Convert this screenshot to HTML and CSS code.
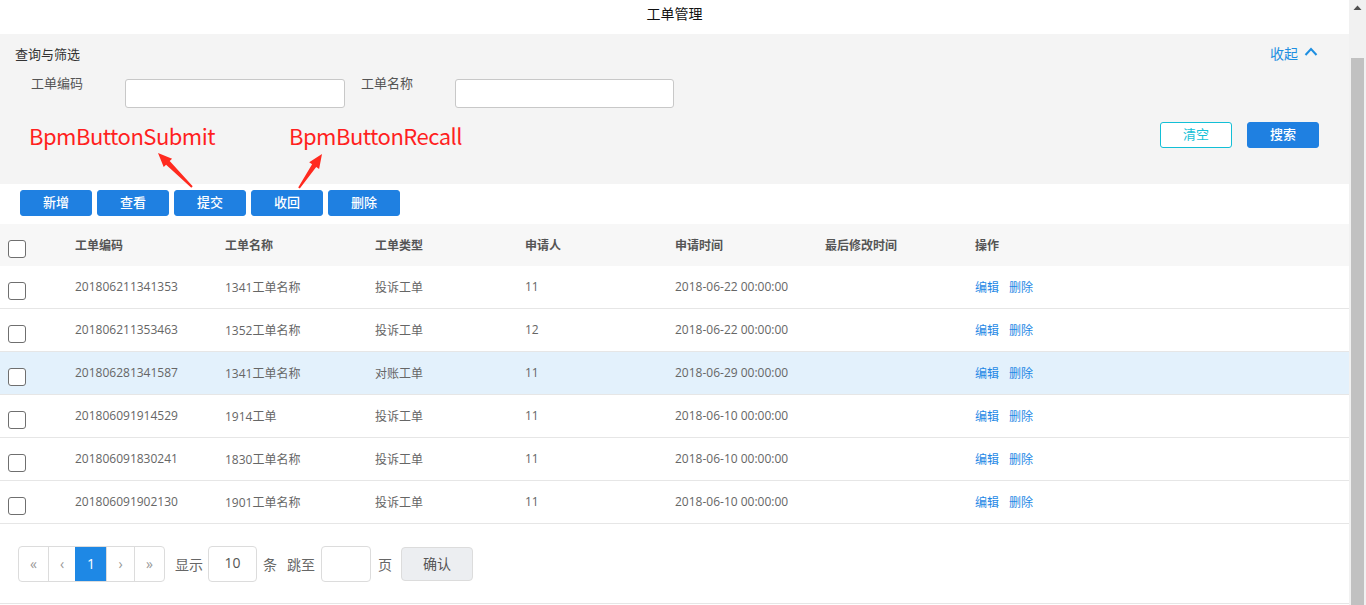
FILE: index.html
```html
<!DOCTYPE html>
<html lang="zh-CN">
<head>
<meta charset="utf-8">
<title>工单管理</title>
<link rel="stylesheet" href="styles.css">
</head>
<body>
<div class="page">
  <div class="main">
    <div class="title">工单管理</div>
    <section class="filter">
      <div class="filter-head">
        <span class="filter-title">查询与筛选</span>
        <a class="collapse">收起<svg class="chev" width="14" height="9" viewBox="0 0 14 9"><path d="M1.5 8 L7 2 L12.5 8" fill="none" stroke="currentColor" stroke-width="2"/></svg></a>
      </div>
      <div class="fields">
        <label class="field-label">工单编码</label>
        <input class="field-input field-input-a" type="text">
        <label class="field-label field-label-b">工单名称</label>
        <input class="field-input field-input-b" type="text">
      </div>
      <div class="filter-actions">
        <button class="btn btn-outline">清空</button>
        <button class="btn btn-primary">搜索</button>
      </div>
    </section>
    <div class="toolbar">
      <button class="btn btn-primary">新增</button>
      <button class="btn btn-primary">查看</button>
      <button class="btn btn-primary">提交</button>
      <button class="btn btn-primary">收回</button>
      <button class="btn btn-primary">删除</button>
    </div>
    <div class="table">
      <div class="row head">
        <div class="cell-check"><span class="checkbox"></span></div>
        <div>工单编码</div><div>工单名称</div><div>工单类型</div><div>申请人</div><div>申请时间</div><div>最后修改时间</div><div>操作</div>
      </div>
      <div class="row">
        <div class="cell-check"><span class="checkbox"></span></div>
        <div>201806211341353</div><div>1341工单名称</div><div>投诉工单</div><div class="num">11</div><div>2018-06-22 00:00:00</div><div></div>
        <div class="ops"><a>编辑</a><a>删除</a></div>
      </div>
      <div class="row">
        <div class="cell-check"><span class="checkbox"></span></div>
        <div>201806211353463</div><div>1352工单名称</div><div>投诉工单</div><div class="num">12</div><div>2018-06-22 00:00:00</div><div></div>
        <div class="ops"><a>编辑</a><a>删除</a></div>
      </div>
      <div class="row active">
        <div class="cell-check"><span class="checkbox"></span></div>
        <div>201806281341587</div><div>1341工单名称</div><div>对账工单</div><div class="num">11</div><div>2018-06-29 00:00:00</div><div></div>
        <div class="ops"><a>编辑</a><a>删除</a></div>
      </div>
      <div class="row">
        <div class="cell-check"><span class="checkbox"></span></div>
        <div>201806091914529</div><div>1914工单</div><div>投诉工单</div><div class="num">11</div><div>2018-06-10 00:00:00</div><div></div>
        <div class="ops"><a>编辑</a><a>删除</a></div>
      </div>
      <div class="row">
        <div class="cell-check"><span class="checkbox"></span></div>
        <div>201806091830241</div><div>1830工单名称</div><div>投诉工单</div><div class="num">11</div><div>2018-06-10 00:00:00</div><div></div>
        <div class="ops"><a>编辑</a><a>删除</a></div>
      </div>
      <div class="row">
        <div class="cell-check"><span class="checkbox"></span></div>
        <div>201806091902130</div><div>1901工单名称</div><div>投诉工单</div><div class="num">11</div><div>2018-06-10 00:00:00</div><div></div>
        <div class="ops"><a>编辑</a><a>删除</a></div>
      </div>
    </div>
    <div class="pager">
      <div class="pages">
        <span class="pg pg-first">«</span>
        <span class="pg pg-prev">‹</span>
        <span class="pg pg-cur">1</span>
        <span class="pg pg-next">›</span>
        <span class="pg pg-last">»</span>
      </div>
      <span class="pg-text pg-show">显示</span>
      <input class="pg-input" type="text" value="10">
      <span class="pg-text pg-unit">条</span>
      <span class="pg-text pg-jump">跳至</span>
      <input class="pg-input pg-input-jump" type="text">
      <span class="pg-text pg-page">页</span>
      <button class="pg-confirm">确认</button>
    </div>
    <div class="annot annot-submit">BpmButtonSubmit</div>
    <div class="annot annot-recall">BpmButtonRecall</div>
    <svg class="arrows" width="1349" height="605" viewBox="0 0 1349 605">
      <polygon fill="#ff2a1f" points="192.7,186.3 169.7,161.1 172.1,158.7 158,153 163.7,167.1 166.1,164.7 191.3,187.7"/>
      <polygon fill="#ff2a1f" points="298.2,187.4 312.1,164.2 309.2,162.2 322,154 319.1,169.0 316.2,167.0 299.8,188.6"/>
    </svg>
  </div>
  <div class="scrollbar">
    <div class="sb-btn"><svg width="17" height="17" viewBox="0 0 17 17"><polygon points="4.5,10 8.5,5.5 12.5,10" fill="#505050"/></svg></div>
    <div class="sb-track"></div>
    <div class="sb-thumb"></div>
  </div>
</div>
</body>
</html>
```

FILE: styles.css
```css
* { box-sizing: border-box; }
html, body { margin: 0; padding: 0; }
body {
  font-family: "Open Sans", "Noto Sans CJK SC", sans-serif;
  color: #333;
  background: #fff;
}
.page {
  display: flex;
  width: 1366px;
  height: 605px;
  overflow: hidden;
}
.main {
  position: relative;
  width: 1349px;
  flex: 0 0 1349px;
}
.title {
  height: 34px;
  line-height: 27px;
  text-align: center;
  font-size: 14px;
  color: #111;
}
.filter {
  height: 150px;
  background: #f4f4f4;
  padding: 9px 30px 0 15px;
}
.filter-head {
  display: flex;
  justify-content: space-between;
  align-items: center;
  height: 20px;
}
.filter-title {
  font-size: 13px;
  color: #333;
}
.collapse {
  display: flex;
  align-items: center;
  gap: 6px;
  font-size: 14px;
  color: #1e8fe1;
  margin-right: 1px;
}
.chev { margin-top: -3px; }
.fields {
  display: flex;
  align-items: flex-start;
  margin-top: 16px;
  padding-left: 16px;
  height: 29px;
}
.field-label {
  width: 94px;
  font-size: 13px;
  line-height: 16px;
  margin-top: -4px;
  color: #555;
}
.field-input {
  width: 220px;
  height: 29px;
  border: 1px solid #c8c8c8;
  border-radius: 3px;
  background: #fff;
  outline: none;
}
.field-label-b { margin-left: 16px; }
.field-input-b { width: 219px; }
.filter-actions {
  display: flex;
  justify-content: flex-end;
  gap: 15px;
  margin-top: 14px;
}
.btn {
  width: 72px;
  height: 26px;
  border-radius: 3px;
  font-family: "Open Sans", "Noto Sans CJK SC", sans-serif;
  font-size: 13px;
  padding: 0 0 3px;
  cursor: pointer;
}
.btn-primary {
  background: #1f80e1;
  border: 1px solid #1f80e1;
  color: #fff;
  font-weight: 500;
}
.btn-outline {
  background: #fff;
  border: 1px solid #13bfd6;
  color: #13bfd6;
}
.toolbar {
  height: 40px;
  padding: 6px 0 0 20px;
  display: flex;
  gap: 5px;
  align-items: flex-start;
}
.table { font-size: 12px; color: #666; }
.row {
  display: grid;
  grid-template-columns: 75px repeat(6, 150px) 1fr;
  align-items: center;
  height: 43px;
  border-bottom: 1px solid #e6e6e6;
  background: #fff;
  padding-bottom: 1px;
}
.row.head {
  height: 42px;
  border-bottom: none;
  background: #f7f7f7;
  font-weight: 600;
  color: #555;
}
.row.active { background: #e3f1fc; }
.cell-check {
  padding-left: 8px;
  padding-top: 8px;
  display: flex;
  align-items: center;
}
.checkbox {
  display: block;
  width: 18px;
  height: 18px;
  border: 1px solid #6f6f6f;
  border-radius: 3px;
  background: #fff;
}
.ops { display: flex; gap: 10px; }
.ops a { color: #1e88e5; }
.pager {
  height: 80px;
  border-bottom: 1px solid #e6e6e6;
  display: flex;
  align-items: center;
  padding-left: 18px;
  font-size: 14px;
}
.pages {
  display: flex;
  height: 36px;
  border: 1px solid #dcdcdc;
  border-radius: 4px;
  overflow: hidden;
}
.pg {
  display: flex;
  align-items: center;
  justify-content: center;
  height: 100%;
  color: #999;
  border-left: 1px solid #dcdcdc;
}
.pg-first { width: 29px; border-left: none; }
.pg-prev { width: 27px; }
.pg-cur { width: 31px; background: #1e88e5; color: #fff; border-left-color: #1e88e5; }
.pg-next { width: 28px; border-left-color: #dcdcdc; }
.pg-last { width: 30px; }
.pg-text { color: #666; }
.pg-show { margin-left: 10px; }
.pg-input {
  width: 49px;
  height: 36px;
  margin-left: 5px;
  border: 1px solid #dcdcdc;
  border-radius: 4px;
  text-align: center;
  font-family: "Open Sans", "Noto Sans CJK SC", sans-serif;
  font-size: 14px;
  color: #555;
  outline: none;
  padding: 0 0 2px;
}
.pg-unit { margin-left: 6px; }
.pg-jump { margin-left: 10px; }
.pg-input-jump { width: 50px; margin-left: 6px; }
.pg-page { margin-left: 7px; }
.pg-confirm {
  margin-left: 9px;
  width: 72px;
  height: 34px;
  border: 1px solid #dcdcdc;
  border-radius: 4px;
  background: #eceef1;
  font-family: "Open Sans", "Noto Sans CJK SC", sans-serif;
  font-size: 14px;
  color: #555;
  padding: 0 0 2px;
}
.annot {
  position: absolute;
  top: 124px;
  font-family: "Noto Sans CJK SC", sans-serif;
  font-size: 22px;
  line-height: 22px;
  letter-spacing: -0.5px;
  color: #ff1f1f;
  white-space: nowrap;
}
.annot-submit { left: 29px; }
.annot-recall { left: 289px; }
.arrows {
  position: absolute;
  left: 0;
  top: 0;
  pointer-events: none;
}
.scrollbar {
  width: 17px;
  flex: 0 0 17px;
  background: #f1f1f1;
  display: flex;
  flex-direction: column;
  align-items: center;
}
.sb-btn { height: 17px; }
.sb-track { height: 41px; }
.sb-thumb {
  width: 13px;
  flex: 1;
  background: #c1c1c1;
}
```
